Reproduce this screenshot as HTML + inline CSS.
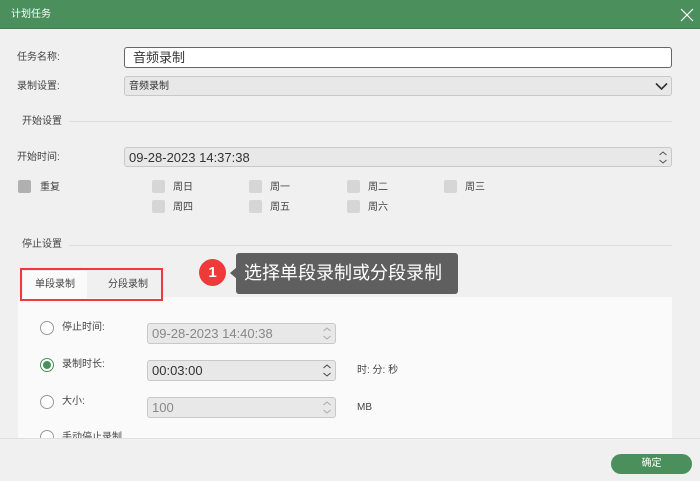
<!DOCTYPE html><html><head><meta charset="utf-8"><style>
*{margin:0;padding:0;box-sizing:border-box}
body{width:700px;height:481px;background:#f0f0f0;font-family:"Liberation Sans","Noto Sans CJK SC",sans-serif;position:relative;overflow:hidden;color:#333}
.a{position:absolute}
.t{font-size:10px;color:#444;line-height:12px}
.inp{position:absolute;border:1px solid #c8c8c8;border-radius:3px;background:#e8e8e8;font-size:13px;color:#333;padding-left:4px;line-height:19px}
.cb{position:absolute;width:13px;height:13px;background:#d6d6d6;border-radius:2px}
.rd{position:absolute;width:14px;height:14px;border:1px solid #999;border-radius:50%;background:#fff}
.sp{position:absolute;right:3px;top:2px}
</style></head><body>
<div class="a" style="left:0;top:0;width:700px;height:29px;background:#4a8f5c;border-bottom:1px solid #3f7d50"></div>
<div class="a t" style="left:11px;top:9px;color:#fff">计划任务</div>
<svg class="a" style="left:680px;top:8px" width="14" height="14"><path d="M1 1L13 13M13 1L1 13" stroke="#fff" stroke-width="1.2"/></svg>

<div class="a t" style="left:17px;top:52px">任务名称:</div>
<div class="inp" style="left:124px;top:47px;width:548px;height:21px;background:#fff;border:1px solid #666;padding-left:8px">音频录制</div>
<div class="a t" style="left:17px;top:81px">录制设置:</div>
<div class="inp" style="left:124px;top:76px;width:548px;height:20px;font-size:10px;line-height:20px">音频录制</div>
<svg class="a" style="left:655px;top:82px" width="13" height="9"><path d="M1 1.5L6.5 7L12 1.5" stroke="#333" stroke-width="1.6" fill="none"/></svg>

<div class="a t" style="left:22px;top:116px">开始设置</div>
<div class="a" style="left:69px;top:121px;width:603px;height:1px;background:#ddd"></div>
<div class="a t" style="left:17px;top:152px">开始时间:</div>
<div class="inp" style="left:124px;top:147px;width:548px;height:20px">09-28-2023 14:37:38<svg class="sp" width="10" height="15"><path d="M1.5 5L5 2L8.5 5M1.5 10L5 13L8.5 10" stroke="#555" fill="none"/></svg></div>

<div class="cb" style="left:18px;top:180px;background:#b0b0b0"></div><div class="a t" style="left:40px;top:182px">重复</div>
<div class="cb" style="left:152px;top:180px"></div><div class="a t" style="left:173px;top:182px">周日</div>
<div class="cb" style="left:249px;top:180px"></div><div class="a t" style="left:270px;top:182px">周一</div>
<div class="cb" style="left:347px;top:180px"></div><div class="a t" style="left:368px;top:182px">周二</div>
<div class="cb" style="left:444px;top:180px"></div><div class="a t" style="left:465px;top:182px">周三</div>
<div class="cb" style="left:152px;top:200px"></div><div class="a t" style="left:173px;top:202px">周四</div>
<div class="cb" style="left:249px;top:200px"></div><div class="a t" style="left:270px;top:202px">周五</div>
<div class="cb" style="left:347px;top:200px"></div><div class="a t" style="left:368px;top:202px">周六</div>

<div class="a t" style="left:22px;top:239px">停止设置</div>
<div class="a" style="left:69px;top:245px;width:603px;height:1px;background:#ddd"></div>

<div class="a" style="left:18px;top:297px;width:654px;height:141px;background:#fafafa"></div>
<div class="a" style="left:23px;top:271px;width:64px;height:27px;background:#fafafa"></div>
<div class="a" style="left:87px;top:271px;width:75px;height:27px;background:#f0f0f0"></div>
<div class="a t" style="left:35px;top:279px">单段录制</div>
<div class="a t" style="left:108px;top:279px">分段录制</div>
<div class="a" style="left:20px;top:268px;width:143px;height:33px;border:2px solid #f03a3a"></div>

<div class="a" style="left:199px;top:259px;width:27px;height:27px;border-radius:50%;background:#f03a3a;color:#fff;font-size:15px;font-weight:bold;text-align:center;line-height:27px">1</div>
<div class="a" style="left:230px;top:267px;width:0;height:0;border-top:6px solid transparent;border-bottom:6px solid transparent;border-right:7px solid #5f5f5f"></div>
<div class="a" style="left:236px;top:253px;width:222px;height:41px;background:#5f5f5f;border-radius:3px;color:#fff;font-size:18px;line-height:41px;padding-left:8px">选择单段录制或分段录制</div>

<div class="rd" style="left:40px;top:321px"></div><div class="a t" style="left:62px;top:322px">停止时间:</div>
<div class="inp" style="left:147px;top:323px;width:189px;height:21px;color:#888">09-28-2023 14:40:38<svg class="sp" width="10" height="15"><path d="M1.5 5L5 2L8.5 5M1.5 10L5 13L8.5 10" stroke="#aaa" fill="none"/></svg></div>
<div class="rd" style="left:40px;top:358px;border-color:#4a8f5c"><div style="position:absolute;left:2px;top:2px;width:8px;height:8px;border-radius:50%;background:#4a8f5c"></div></div>
<div class="a t" style="left:62px;top:359px">录制时长:</div>
<div class="inp" style="left:147px;top:360px;width:189px;height:21px">00:03:00<svg class="sp" width="10" height="15"><path d="M1.5 5L5 2L8.5 5M1.5 10L5 13L8.5 10" stroke="#444" fill="none"/></svg></div>
<div class="a t" style="left:357px;top:365px">时: 分: 秒</div>
<div class="rd" style="left:40px;top:395px"></div><div class="a t" style="left:62px;top:396px">大小:</div>
<div class="inp" style="left:147px;top:397px;width:189px;height:21px;color:#888">100<svg class="sp" width="10" height="15"><path d="M1.5 5L5 2L8.5 5M1.5 10L5 13L8.5 10" stroke="#aaa" fill="none"/></svg></div>
<div class="a t" style="left:357px;top:402px">MB</div>
<div class="rd" style="left:40px;top:430px"></div><div class="a t" style="left:62px;top:432px">手动停止录制</div>

<div class="a" style="left:0;top:438px;width:700px;height:43px;background:#f0f0f0;border-top:1px solid #e0e0e0"></div>
<div class="a" style="left:611px;top:454px;width:81px;height:20px;border-radius:10px;background:#4a8f5c;color:#fff;font-size:10px;text-align:center;line-height:20px">确定</div>
</body></html>
